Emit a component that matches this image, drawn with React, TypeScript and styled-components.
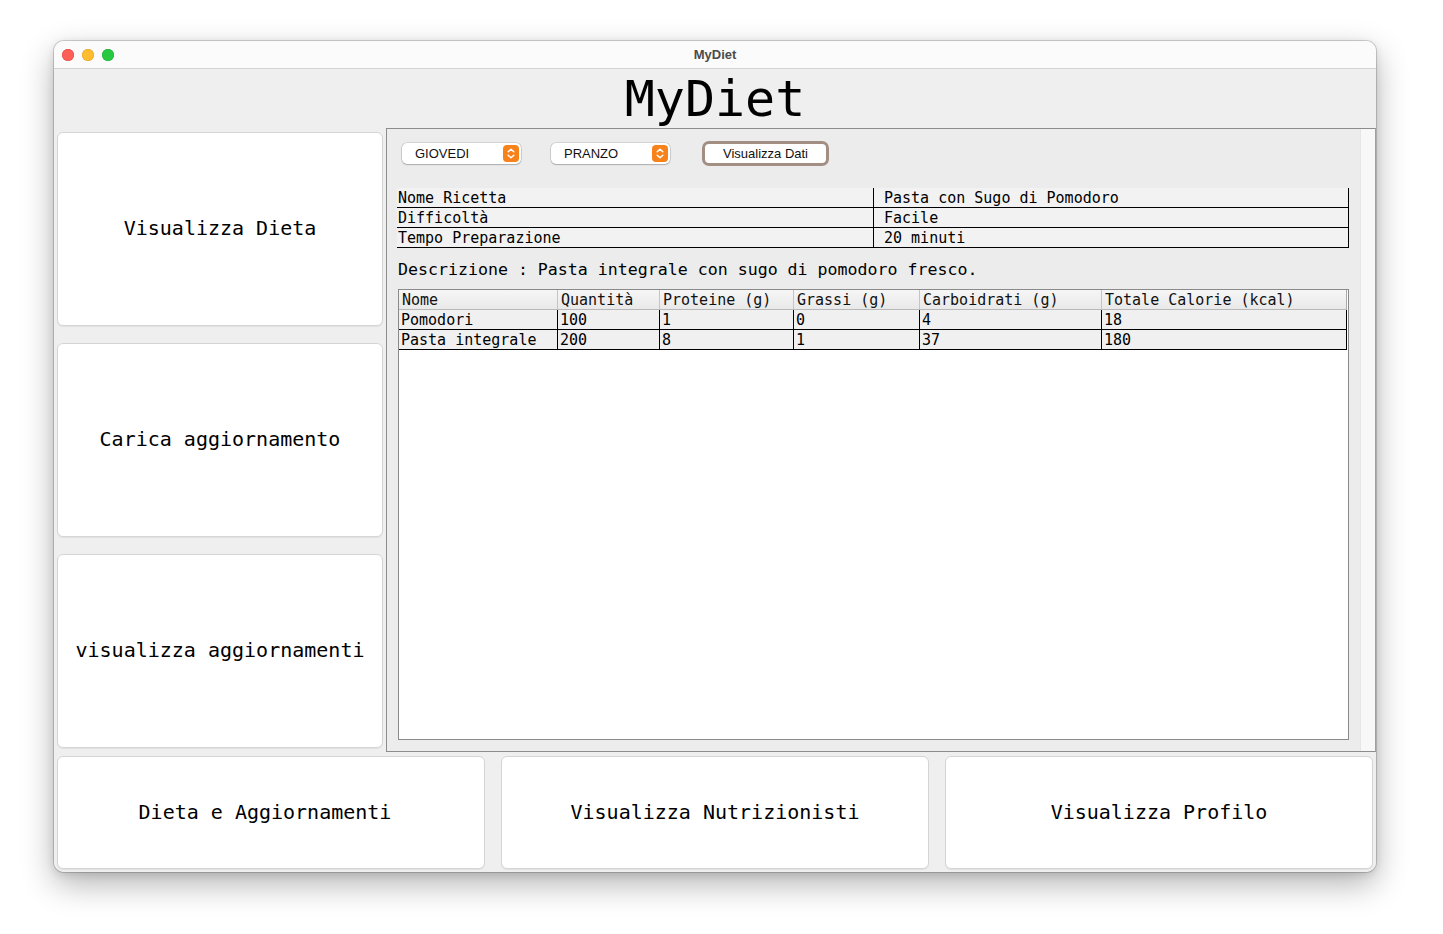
import React from "react";
import styled, { createGlobalStyle } from "styled-components";

const Global = createGlobalStyle`
  html, body { margin: 0; padding: 0; background: #ffffff; }
  body { font-family: "Liberation Sans", Arial, sans-serif; }
  * { box-sizing: border-box; }
`;

const MONO = `"DejaVu Sans Mono", "Liberation Mono", monospace`;

const Stage = styled.div`
  width: 1443px;
  height: 934px;
  padding: 41px 0 0 54px;
`;

const Window = styled.div`
  width: 1322px;
  height: 831px;
  border-radius: 10px;
  overflow: hidden;
  display: flex;
  flex-direction: column;
  box-shadow: 0 0 0 1px rgba(0, 0, 0, 0.16), 0 12px 32px rgba(0, 0, 0, 0.3),
    0 2px 8px rgba(0, 0, 0, 0.12);
`;

const TitleBar = styled.div`
  height: 28px;
  flex: none;
  background: #fbfbfb;
  border-bottom: 1px solid #d3d3d3;
  display: flex;
  align-items: center;
  position: relative;
  padding-left: 8px;
`;

const Lights = styled.div`
  display: flex;
  gap: 8px;
`;

const Light = styled.span<{ $c: string; $b: string }>`
  width: 12px;
  height: 12px;
  border-radius: 50%;
  background: ${(p) => p.$c};
  box-shadow: inset 0 0 0 0.5px ${(p) => p.$b};
`;

const WinTitle = styled.div`
  position: absolute;
  left: 0;
  right: 0;
  top: 0;
  height: 27px;
  line-height: 27px;
  text-align: center;
  font-size: 13px;
  font-weight: bold;
  color: #4b4b4b;
  pointer-events: none;
`;

const Content = styled.div`
  flex: 1;
  background: #efefef;
  display: flex;
  flex-direction: column;
`;

const Heading = styled.div`
  height: 59px;
  flex: none;
  font-family: ${MONO};
  font-size: 50px;
  line-height: 61px;
  text-align: center;
  color: #000;
`;

const Middle = styled.div`
  height: 624px;
  flex: none;
  display: flex;
`;

const LeftCol = styled.div`
  width: 332px;
  flex: none;
  padding: 4px 3px;
  display: flex;
  flex-direction: column;
  gap: 17px;
`;

const BigButton = styled.button`
  flex: 1;
  background: #ffffff;
  border: 1px solid #d5d5d5;
  border-radius: 6px;
  box-shadow: 0 1px 1px rgba(0, 0, 0, 0.06);
  font-family: ${MONO};
  font-size: 20px;
  color: #000;
  padding: 0 0 2px 0;
  white-space: pre;
  display: flex;
  align-items: center;
  justify-content: center;
`;

const Panel = styled.div`
  flex: 1;
  display: flex;
  border: 1px solid #8c8c8c;
  border-right-color: #a0a0a0;
  background: #ececec;
`;

const PanelBody = styled.div`
  flex: 1;
  display: flex;
  flex-direction: column;
  padding: 12px 11px 11px 10px;
`;

const Track = styled.div`
  width: 15px;
  flex: none;
  background: #f8f8f8;
  border-left: 1px solid #e6e6e6;
`;

const Controls = styled.div`
  height: 25px;
  display: flex;
  align-items: center;
  padding-left: 5px;
`;

const Combo = styled.div<{ $mr: number }>`
  width: 119px;
  height: 21px;
  margin-right: ${(p) => p.$mr}px;
  background: #fff;
  border-radius: 5px;
  box-shadow: 0 0 0 0.5px rgba(0, 0, 0, 0.22), 0 1px 1.5px rgba(0, 0, 0, 0.18);
  display: flex;
  align-items: center;
  justify-content: space-between;
  padding: 0 2px 0 13px;
  font-size: 13px;
  color: #111;
`;

const Arrow = styled.span`
  width: 16px;
  height: 17px;
  border-radius: 4px;
  background: #f7821b;
  display: flex;
  align-items: center;
  justify-content: center;
`;

const ActionButton = styled.button`
  width: 127px;
  height: 25px;
  border: 3px solid #a28e83;
  border-radius: 7px;
  background: #fff;
  font-family: "Liberation Sans", Arial, sans-serif;
  font-size: 13px;
  color: #111;
  padding: 0;
`;

const InfoTable = styled.div`
  margin-top: 22px;
  background: #f2f2f2;
  display: flex;
  flex-direction: column;
`;

const InfoRow = styled.div`
  height: 20px;
  display: flex;
  border-bottom: 1px solid #000;
  font-family: ${MONO};
  font-size: 15px;
  line-height: 21px;
  color: #000;
`;

const InfoCell = styled.div<{ $w?: number }>`
  ${(p) => (p.$w ? `width: ${p.$w}px; flex: none;` : "flex: 1;")}
  padding-left: ${(p) => (p.$w ? 1 : 10)}px;
  border-right: 1px solid #000;
  white-space: nowrap;
  overflow: hidden;
`;

const Description = styled.div`
  margin-top: 10px;
  height: 22px;
  line-height: 24px;
  padding-left: 1px;
  font-family: ${MONO};
  font-size: 16.6px;
  color: #000;
  white-space: nowrap;
`;

const Scroll = styled.div`
  margin-top: 9px;
  margin-left: 1px;
  flex: 1;
  border: 1px solid #8a8a8a;
  background: #fff;
  display: flex;
  flex-direction: column;
`;

const HeadRow = styled.div`
  height: 20px;
  display: flex;
  width: 948px;
  background: linear-gradient(#f6f6f6, #e9e9e9);
  border-bottom: 1px solid #b8b8b8;
  border-right: 1px solid #a8a8a8;
  font-family: ${MONO};
  font-size: 15px;
  line-height: 21px;
  color: #111;
`;

const HeadCell = styled.div<{ $w: number }>`
  width: ${(p) => p.$w}px;
  flex: none;
  padding-left: 3px;
  border-right: 1px solid #c4c4c4;
  white-space: nowrap;
  overflow: hidden;
  &:last-child { border-right: none; flex: 1; }
`;

const DataRow = styled.div`
  height: 20px;
  display: flex;
  width: 948px;
  background: #f0f0f0;
  border-bottom: 1px solid #000;
  font-family: ${MONO};
  font-size: 15px;
  line-height: 21px;
  color: #000;
`;

const DataCell = styled.div<{ $w: number }>`
  width: ${(p) => p.$w}px;
  flex: none;
  padding-left: 2px;
  border-right: 1px solid #000;
  white-space: nowrap;
  overflow: hidden;
  &:last-child { flex: 1; }
`;

const BottomRow = styled.div`
  flex: 1;
  display: flex;
  gap: 16px;
  padding: 4px 3px 3px 3px;
`;

const cols = [159, 102, 134, 126, 182, 245];
const headers = ["Nome", "Quantità", "Proteine (g)", "Grassi (g)", "Carboidrati (g)", "Totale Calorie (kcal)"];
const rows = [
  ["Pomodori", "100", "1", "0", "4", "18"],
  ["Pasta integrale", "200", "8", "1", "37", "180"],
];

const Chevrons = () => (
  <svg width="10" height="13" viewBox="0 0 10 13">
    <path d="M2.2 4.8 L5 2.2 L7.8 4.8" fill="none" stroke="#fff" strokeWidth="1.5" strokeLinecap="round" strokeLinejoin="round" />
    <path d="M2.2 8.2 L5 10.8 L7.8 8.2" fill="none" stroke="#fff" strokeWidth="1.5" strokeLinecap="round" strokeLinejoin="round" />
  </svg>
);

export default function App() {
  return (
    <>
      <Global />
      <Stage>
        <Window>
          <TitleBar>
            <Lights>
              <Light $c="#fe5f57" $b="#e0443e" />
              <Light $c="#febc2e" $b="#dea123" />
              <Light $c="#28c840" $b="#1aab29" />
            </Lights>
            <WinTitle>MyDiet</WinTitle>
          </TitleBar>
          <Content>
            <Heading>MyDiet</Heading>
            <Middle>
              <LeftCol>
                <BigButton>Visualizza Dieta</BigButton>
                <BigButton>Carica aggiornamento</BigButton>
                <BigButton>visualizza aggiornamenti</BigButton>
              </LeftCol>
              <Panel>
                <PanelBody>
                  <Controls>
                    <Combo $mr={30}>
                      <span>GIOVEDI</span>
                      <Arrow><Chevrons /></Arrow>
                    </Combo>
                    <Combo $mr={32}>
                      <span>PRANZO</span>
                      <Arrow><Chevrons /></Arrow>
                    </Combo>
                    <ActionButton>Visualizza Dati</ActionButton>
                  </Controls>
                  <InfoTable>
                    <InfoRow>
                      <InfoCell $w={477}>Nome Ricetta</InfoCell>
                      <InfoCell>Pasta con Sugo di Pomodoro</InfoCell>
                    </InfoRow>
                    <InfoRow>
                      <InfoCell $w={477}>Difficoltà</InfoCell>
                      <InfoCell>Facile</InfoCell>
                    </InfoRow>
                    <InfoRow>
                      <InfoCell $w={477}>Tempo Preparazione</InfoCell>
                      <InfoCell>20 minuti</InfoCell>
                    </InfoRow>
                  </InfoTable>
                  <Description>Descrizione : Pasta integrale con sugo di pomodoro fresco.</Description>
                  <Scroll>
                    <HeadRow>
                      {headers.map((h, i) => (
                        <HeadCell key={h} $w={cols[i]}>{h}</HeadCell>
                      ))}
                    </HeadRow>
                    {rows.map((r) => (
                      <DataRow key={r[0]}>
                        {r.map((c, i) => (
                          <DataCell key={i} $w={cols[i]}>{c}</DataCell>
                        ))}
                      </DataRow>
                    ))}
                  </Scroll>
                </PanelBody>
                <Track />
              </Panel>
            </Middle>
            <BottomRow>
              <BigButton>{"Dieta e Aggiornamenti "}</BigButton>
              <BigButton>Visualizza Nutrizionisti</BigButton>
              <BigButton>Visualizza Profilo</BigButton>
            </BottomRow>
          </Content>
        </Window>
      </Stage>
    </>
  );
}
